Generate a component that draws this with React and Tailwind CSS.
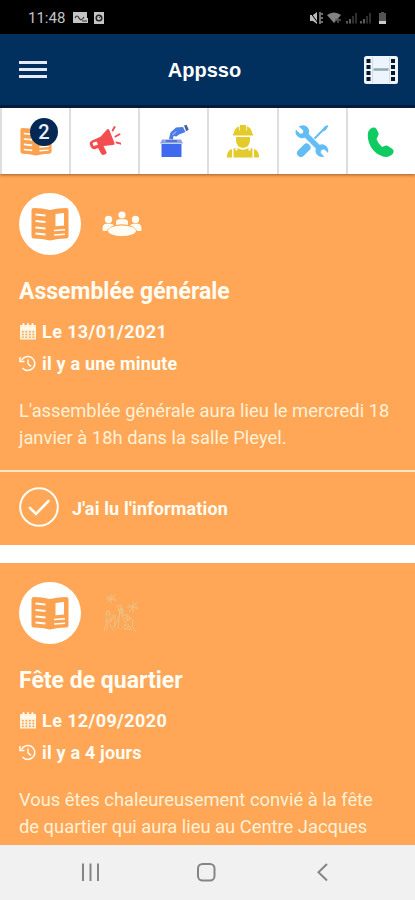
import React from 'react';

const posts = [
  {
    id: 1,
    title: 'Assemblée générale',
    date: 'Le 13/01/2021',
    ago: 'il y a une minute',
    text: ["L'assemblée générale aura lieu le mercredi 18", 'janvier à 18h dans la salle Pleyel.'],
    icon: 'meeting',
    footer: true,
  },
  {
    id: 2,
    title: 'Fête de quartier',
    date: 'Le 12/09/2020',
    ago: 'il y a 4 jours',
    text: ['Vous êtes chaleureusement convié à la fête', 'de quartier qui aura lieu au Centre Jacques'],
    icon: 'party',
    footer: false,
  },
];

const NewspaperIcon = ({ className }) => (
  <svg viewBox="0 0 38 34" className={className}>
    <path d="M3 1 Q11 1 19 3 Q27 1 35 1 Q37.500 1 37.500 3 V29 Q37.500 31.500 35 31.500 Q27 31.500 19 33.500 Q11 31.500 3 31.500 Q.5 31.500 .5 29 V3 Q.5 1 3 1Z" fill="#faa24f" />
    <g fill="none" stroke="#fff" strokeWidth="2">
      <path d="M4.500 7.500l10 1M4.500 14l10 1M4.500 20.500l10 1M4.500 26.500l10 1" />
      <path d="M23 23.500l11-.8M23 28l11-.8" strokeWidth="1.600" />
    </g>
    <path d="M24.500 7l8.500-1v12.500l-8.500 .8z" fill="#fff" />
  </svg>
);

const MegaphoneIcon = () => (
  <svg viewBox="0 0 32 30" className="h-[30px] w-8">
    <path d="M18 3.500 Q19.500 2.500 20.300 4 L25.500 17 Q26 19 24 19 L14.500 20 L17.500 26 Q18 27.500 16.500 28.200 L14 28.900 Q12.800 29 12 27.500 L9 22 L6.500 23 Q3.500 23.800 1.800 21 L.8 18.500 Q.2 15.800 3 14.400 L11.500 10.800Z" fill="#f44d50" />
    <path d="M4.500 20l-.8-2.100q-.2-.9 .8-1.400l3-1.100q1.200 1.600 1.400 3.300z" fill="#fff" />
    <path d="M23.700 4.500L25.600 1M26.500 10.500l4-2.300M27.500 16.500l4.200 1.200" fill="none" stroke="#f44d50" strokeWidth="1.900" strokeLinecap="round" />
  </svg>
);

const VoteIcon = () => (
  <svg viewBox="0 0 30 34" className="h-[34px] w-[30px]">
    <path d="M2.500 20H22.500V33H2.500Z" fill="#4169f0" />
    <path d="M3 15.500H22L24 19.500H1Z" fill="#8ba3e2" />
    <path d="M7 17H18" stroke="#3556c8" strokeWidth="1.200" />
    <path d="M10 15L11.500 8.500L17 3.500L24 3L26.500 8L20 10.500L17.500 12.500L14.500 12L14 15.500Z" fill="#4b7be5" />
    <path d="M13.500 11l3.500-3.500" stroke="#fff" strokeWidth=".7" />
    <path d="M25 1.500l2.500-.8 2.300 5-2.600 1.600z" fill="#46639f" />
  </svg>
);

const WorkerIcon = () => (
  <svg viewBox="0 0 34 34" className="h-[34px] w-[34px]" fill="#e3cb2d">
    <path d="M8 9.500V8.500Q8.500 4 13.300 2.200V6.500H14V1H20V6.500H20.700V2.200Q25.500 4 26 8.500V9.500H27V11.500H7V9.500Z" />
    <path d="M10 13H24V16Q24 23 17 24Q10 23 10 16Z" />
    <path d="M7.500 24.500L9.500 24V26.500H11.500V24Q17 27.500 22.500 24V26.500H24.500V24L26.500 24.500V33.500H7.500Z" />
    <path d="M6 25V33.500H.8Q.8 26.500 6 25ZM28 25V33.500H33.200Q33.200 26.500 28 25Z" />
  </svg>
);

const ToolsIcon = () => (
  <svg viewBox="0 0 34 34" className="h-[34px] w-[34px]">
    <path d="M31 3L19.500 14.500" stroke="#62bdf5" strokeWidth="2" />
    <path d="M29 3L32.500 1L33.300 2L31 6L28 7.500L27 6.500Z" fill="#62bdf5" />
    <path d="M11.500 23.500L6 29" stroke="#62bdf5" strokeWidth="8" strokeLinecap="round" />
    <path d="M4 2.500L8.500 6.500L8 9.500L5 10L1 6Q0 10 3 12.500Q6 15 10 13.500L21 24.500Q20 28.500 22.500 31Q25 33.500 29 32.500L25.500 29L26 26L29 25L33 28.500Q33.500 24.500 31 22Q28 19.500 24.500 21L13.500 10Q15 6 12 3Q9 .5 4 2.500Z" fill="#62bdf5" stroke="#62bdf5" strokeWidth=".5" />
  </svg>
);

const PhoneIcon = () => (
  <svg viewBox="0 0 28 31" className="mt-0.5 h-[31px] w-7">
    <path d="M5 .8Q8 0 9.500 2L11.500 6Q12 8 10.500 10L9.500 12Q11 16.500 15 20L18 18.800Q19.500 18 21 19L25.500 22Q27.500 24 26 26.500Q22 31 16 29.500C6 26.500 1 17 .8 9Q.5 2.500 5 .8Z" fill="#10cb62" />
  </svg>
);

const MeetingIcon = () => (
  <svg viewBox="0 0 40 26" className="h-[26px] w-10" fill="#fffdf3">
    <circle cx="20" cy="4" r="3.600" />
    <path d="M14 14V11.500Q14 8.300 17.500 8.300H22.500Q26 8.300 26 11.500V14Q20 12.500 14 14Z" />
    <circle cx="6.500" cy="8.500" r="3.700" />
    <circle cx="33.500" cy="8.500" r="3.700" />
    <path d="M.5 18Q.5 12.800 4.500 12.800H8.500Q11 12.800 12 14.500Q6 16.500 5 20H.8ZM39.500 18Q39.500 12.800 35.500 12.800H31.500Q29 12.800 28 14.500Q34 16.500 35 20H39.200Z" />
    <ellipse cx="20" cy="19.800" rx="14" ry="5.300" />
  </svg>
);

const PartyIcon = () => (
  <svg viewBox="0 0 38 40" className="h-10 w-[38px]" fill="none" stroke="#e8c585" strokeWidth=".8">
    <path d="M9 1v9M4 3l10 5M13 2L5 9M4 6h10M31 8v12M26 12l10 4M35 9l-8 10M25 14h11" />
    <path d="M2 38l2-7V21l2-3 2 3v8l3-7 2 1-1 12 5-12 2-8 2 1v7l4-2v7l3-4 3 4-1 5 4 6" />
    <path d="M5 38V26l4 8 3 4M16 36l2-17-3-6 4-1 1 10 4 9-5 5M22 31l5 3-5 2 8 1-4-6M9 28l5-6" />
    <circle cx="6" cy="20" r="2" />
    <circle cx="19" cy="18" r="2" />
    <circle cx="26" cy="25" r="2" />
  </svg>
);

const CalendarIcon = () => (
  <svg viewBox="0 0 18 17" className="h-[17px] w-[18px]">
    <path d="M1 2H17V16.500H1Z" fill="#fff1d6" />
    <path d="M4.500 .3V3.500M9 .3V3.500M13.500 .3V3.500" stroke="#fffdf3" strokeWidth="1.800" />
    <path d="M1 5.300H17" stroke="#fffdf3" strokeWidth="2" />
    <path d="M3 8.800H15.500M3 11.500H15.500M3 14.200H15.500" stroke="#eda45c" strokeWidth="1.400" strokeDasharray="1.700 1.800" />
  </svg>
);

const HistoryIcon = () => (
  <svg viewBox="0 0 18 17" className="h-[17px] w-[18px]" fill="none" stroke="#fffdf3" strokeWidth="1.500">
    <path d="M2.500 5.500A7 7 0 1 1 3.500 13" />
    <path d="M1 2v4.500h4.500" />
    <path d="M9 4.500v4.300l3 2.500" />
  </svg>
);

const tabs = [
  { id: 'news', icon: <NewspaperIcon className="h-[29px] w-8" />, badge: 2 },
  { id: 'alerts', icon: <MegaphoneIcon /> },
  { id: 'votes', icon: <VoteIcon /> },
  { id: 'works', icon: <WorkerIcon /> },
  { id: 'repairs', icon: <ToolsIcon /> },
  { id: 'call', icon: <PhoneIcon /> },
];

const StatusBar = () => (
  <div className="flex h-[34px] shrink-0 items-center bg-black pl-7 pr-[26px] pt-px text-[#c4c4c4]">
    <span className="w-[44px] pt-px text-[15px]">11:48</span>
    <svg viewBox="0 0 34 14" className="h-[14px] w-[34px]">
      <path d="M1 1H15V7H16V12H1Z" fill="#c4c4c4" />
      <path d="M3 7q2-4 4 0t5-1M10 10h5" stroke="#333" strokeWidth="1.200" fill="none" />
      <rect x="22" y="1" width="10" height="12" fill="#c4c4c4" />
      <circle cx="27" cy="7" r="2.800" fill="none" stroke="#222" strokeWidth="1.500" />
      <path d="M27 7l2-2" stroke="#222" />
    </svg>
    <svg viewBox="0 0 80 14" className="ml-auto h-[14px] w-20">
      <path d="M1 4H4L8 1V13L4 10H1Z" fill="#bbb" />
      <path d="M1 1L9 12" stroke="#000" strokeWidth="1" />
      <path d="M11 1v12M13 2v2M13 6v2M13 10v2" stroke="#aaa" strokeWidth="1.300" />
      <path d="M18 4Q25-1 32 4L25 12Z" fill="#828282" />
      <path d="M26 9h6M29 7v5" stroke="#555" strokeWidth="1.500" />
      <path d="M38 10v2.500M41 8v4.500" stroke="#777" strokeWidth="1.500" />
      <path d="M44 5v7.500M47 2v10.500" stroke="#3e3e3e" strokeWidth="1.500" />
      <path d="M52 10v2.500M55 8v4.500" stroke="#777" strokeWidth="1.500" />
      <path d="M58 5v7.500M61 2v10.500" stroke="#3e3e3e" strokeWidth="1.500" />
      <path d="M70 2H72V1H75V2H77V10H70Z" fill="#555" />
      <path d="M70 10H77V13H70Z" fill="#ccc" />
    </svg>
  </div>
);

const Header = () => (
  <header className="flex h-[74px] shrink-0 items-center justify-between border-b-[3px] border-[#001b41] bg-[#01305f] pl-[19px] pr-[17px]">
    <button className="flex w-7 flex-col gap-1">
      <span className="h-[3px] bg-[#e7eaf8]" />
      <span className="h-[3px] bg-[#e7eaf8]" />
      <span className="h-[3px] bg-[#e7eaf8]" />
    </button>
    <h1 className="-ml-0.5 font-['Liberation_Sans'] text-[20px] font-bold leading-6 text-white">Appsso</h1>
    <svg viewBox="0 0 34 28" className="h-7 w-[34px]">
      <rect x="0" y="0" width="34" height="28" rx="2.500" fill="#edf4fb" />
      <path d="M4.500 3v22M29 3v22" stroke="#07172b" strokeWidth="4" strokeDasharray="4 2" />
      <path d="M8.500 1v26M25.500 1v26" stroke="#c5d3df" strokeWidth=".7" />
      <path d="M9.500 13.500H24.500" stroke="#8ea9b1" strokeWidth="2.500" />
    </svg>
  </header>
);

const PostCard = ({ post }) => (
  <article className="shrink-0 bg-[#ffa657] text-[#fffdf3]">
    <div className="px-[19px] pt-[19px]">
      <div className="flex items-center gap-[21px]">
        <div className="flex h-[62px] w-[62px] items-center justify-center rounded-full bg-white">
          <NewspaperIcon className="h-[34px] w-[38px]" />
        </div>
        {post.icon === 'meeting' ? <MeetingIcon /> : <PartyIcon />}
      </div>
      <h2 className="mt-[23px] text-[23px] font-bold leading-7">{post.title}</h2>
      <p className="mt-[9px] flex h-8 items-center gap-[5px] text-[18px] font-bold tracking-[0.4px]">
        <CalendarIcon />
        {post.date}
      </p>
      <p className="flex h-8 items-center gap-[5px] text-[18px] font-bold tracking-[0.18px]">
        <HistoryIcon />
        {post.ago}
      </p>
      <div className="mt-[18px] whitespace-nowrap text-[18.35px] leading-[27px] text-[#fff1d6]">
        {post.text.map((line) => (
          <p key={line}>{line}</p>
        ))}
      </div>
    </div>
    {post.footer ? (
      <div className="mt-[19px] flex h-[75px] items-center gap-[13px] border-t-2 border-[#ffe9c4] px-[19px] text-[18px] font-bold tracking-[0.16px]">
        <svg viewBox="0 0 40 40" className="-mt-1 h-10 w-10" fill="none" stroke="#fffdf3">
          <circle cx="20" cy="20" r="18.800" strokeWidth="2" />
          <path d="M11 21l6 6 12.500-13" strokeWidth="2.600" strokeLinecap="round" />
        </svg>
        J'ai lu l'information
      </div>
    ) : (
      <div className="h-6" />
    )}
  </article>
);

const App = () => {
  return (
    <div className="flex h-[900px] w-[415px] flex-col overflow-hidden bg-white font-[Roboto]">
      <StatusBar />
      <Header />
      <nav className="z-10 grid h-[66px] shrink-0 grid-cols-6 bg-white shadow-[0_1px_3px_rgba(90,50,10,0.6)]">
        {tabs.map((tab) => (
          <button key={tab.id} className="relative flex items-center justify-center border-l-2 border-[#dededf]">
            {tab.icon}
            {tab.badge && (
              <span className="absolute left-[28px] top-[10px] flex h-7 w-7 items-center justify-center rounded-full bg-[#032854] text-[20px] font-medium text-[#e9f0fa]">
                {tab.badge}
              </span>
            )}
          </button>
        ))}
      </nav>
      <main className="flex min-h-0 flex-1 flex-col gap-[18px] overflow-hidden">
        {posts.map((post) => (
          <PostCard key={post.id} post={post} />
        ))}
      </main>
      <footer className="h-[55px] shrink-0 bg-[#f1f1f2]">
        <svg viewBox="0 0 415 55" className="h-[55px] w-[415px]" fill="none" stroke="#858585" strokeWidth="2">
          <path d="M83 18.500V36M90.500 18.500V36M98 18.500V36" />
          <rect x="198" y="19" width="16.500" height="16.500" rx="4.500" />
          <path d="M327 19l-8.500 8.300L327 35.500" />
        </svg>
      </footer>
    </div>
  );
};

export default App;
